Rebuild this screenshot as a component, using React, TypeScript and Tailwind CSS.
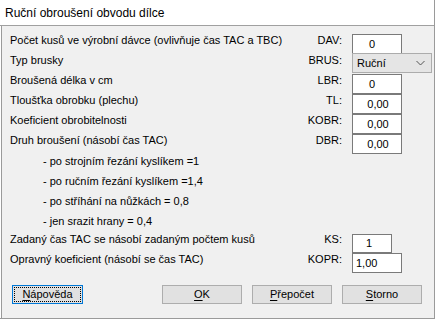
import React from "react";

const rows = [
  { label: "Počet kusů ve výrobní dávce (ovlivňuje čas TAC a TBC)", code: "DAV:", value: "0", kind: "int" },
  { label: "Typ brusky", code: "BRUS:", value: "Ruční", kind: "combo" },
  { label: "Broušená délka v cm", code: "LBR:", value: "0", kind: "int" },
  { label: "Tloušťka obrobku (plechu)", code: "TL:", value: "0,00", kind: "num" },
  { label: "Koeficient obrobitelnosti", code: "KOBR:", value: "0,00", kind: "num" },
  { label: "Druh broušení (násobí čas TAC)", code: "DBR:", value: "0,00", kind: "num" },
];

const hints = [
  "- po strojním řezání kyslíkem =1",
  "- po ručním řezání kyslíkem =1,4",
  "- po stříhání na nůžkách = 0,8",
  "- jen srazit hrany = 0,4",
];

function Field({ kind, value }: { kind: string; value: string }) {
  if (kind === "combo") {
    return (
      <div className="mt-[3px] flex h-[20px] w-[80px] items-center justify-between border border-[#acacac] bg-[#e5e5e5] pl-[4px] pr-[6px]">
        <span>{value}</span>
        <svg width="9" height="6" viewBox="0 0 9 6" className="text-[#555]">
          <path d="M0.5 1 L4.5 5 L8.5 1" fill="none" stroke="currentColor" strokeWidth="1" />
        </svg>
      </div>
    );
  }
  return (
    <div
      className={`mt-[4px] flex h-[20px] w-[50px] items-center justify-center border border-[#7a7a7a] bg-white ${
        kind === "int" ? "pr-[10px]" : "pl-[2px]"
      }`}
    >
      {value}
    </div>
  );
}

function Button({ label, rest, focused, width }: { label: string; rest: string; focused?: boolean; width: string }) {
  return (
    <div
      className={`flex h-[19px] items-center justify-center border bg-[#e1e1e1] p-[1px] ${width} ${
        focused ? "border-[#0078d7]" : "border-[#adadad]"
      }`}
    >
      <div
        className={`flex h-full w-full items-center justify-center ${
          focused ? "outline-1 outline-dotted outline-black -outline-offset-1" : ""
        }`}
      >
        <span className="underline underline-offset-2">{label}</span>
        {rest}
      </div>
    </div>
  );
}

export default function App() {
  return (
    <div
      className="h-[322px] w-[437px] bg-white text-[11px] text-black"
      style={{ fontFamily: '"Liberation Sans", Arial, sans-serif' }}
    >
      <div className="h-[319px] w-[435px] border-r border-b border-[#9a9a9a]">
        <div className="flex h-[26px] items-center border-b border-[#a0a0a0] pl-[5px] text-[12px]">
          Ruční obroušení obvodu dílce
        </div>
        <div className="ml-[1px] flex h-[292px] flex-col border-l border-[#9a9a9a] bg-[#f0f0f0] pt-[4px]">
          {rows.map((r) => (
            <div key={r.code} className="flex h-[20px] items-start">
              <div className="w-[270px] pl-[8px] leading-[20px] whitespace-nowrap">{r.label}</div>
              <div className="w-[70px] text-right leading-[20px]">{r.code}</div>
              <div className="ml-[10px]">
                <Field kind={r.kind} value={r.value} />
              </div>
            </div>
          ))}
          <div className="mt-[1px] flex flex-col pl-[41px]">
            {hints.map((h) => (
              <div key={h} className="h-[20px] leading-[20px]">
                {h}
              </div>
            ))}
          </div>
          <div className="mt-[-2px] flex h-[20px] items-start">
            <div className="w-[270px] pl-[8px] leading-[20px] whitespace-nowrap">
              Zadaný čas TAC se násobí zadaným počtem kusů
            </div>
            <div className="w-[70px] text-right leading-[20px]">KS:</div>
            <div className="ml-[10px] mt-[5px] flex h-[19px] w-[40px] items-center justify-center border border-[#7a7a7a] bg-white pr-[6px]">
              1
            </div>
          </div>
          <div className="flex h-[20px] items-start">
            <div className="w-[270px] pl-[8px] leading-[20px] whitespace-nowrap">Opravný koeficient (násobí se čas TAC)</div>
            <div className="w-[70px] text-right leading-[20px]">KOPR:</div>
            <div className="ml-[10px] mt-[4px] flex h-[20px] w-[50px] items-center border border-[#7a7a7a] bg-white pl-[3px]">
              1,00
            </div>
          </div>
          <div className="mt-[16px] flex items-center pl-[10px]">
            <Button label="N" rest="ápověda" focused width="w-[71px]" />
            <div className="ml-[79px]">
              <Button label="O" rest="K" width="w-[80px]" />
            </div>
            <div className="ml-[10px]">
              <Button label="P" rest="řepočet" width="w-[80px]" />
            </div>
            <div className="ml-[10px]">
              <Button label="S" rest="torno" width="w-[80px]" />
            </div>
          </div>
        </div>
      </div>
    </div>
  );
}
